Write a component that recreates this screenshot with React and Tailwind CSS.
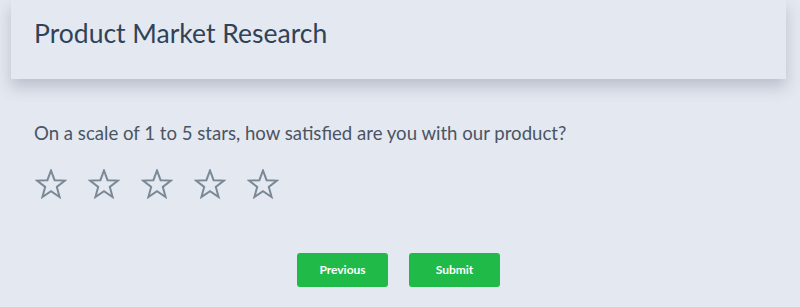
import React, { useState } from 'react';

const Star = ({ filled }) => (
  <svg viewBox="0 0 32 30" className="h-[30px] w-[32px]" fill={filled ? '#7b8896' : 'none'}>
    <polygon
      points="16,1.5 19.6,11.2 30,11.6 21.8,18 24.6,28 16,22.2 7.4,28 10.2,18 2,11.6 12.4,11.2"
      stroke="#7b8896"
      strokeWidth="2"
      strokeLinejoin="miter"
    />
  </svg>
);

export default function App() {
  const [rating, setRating] = useState(0);

  return (
    <div className="min-h-[307px] w-full bg-[#e4e8f0] font-['Lato','Open_Sans',sans-serif]">
      <div className="pl-[11px] pr-[14px] pb-[14px]">
        <div className="h-[79px] bg-[#e4e8f0] px-[23px] pt-[16px] shadow-[0_8px_14px_rgba(90,100,120,0.3)]">
          <h1 className="text-[26.5px] leading-[34px] text-[#2f4358]">Product Market Research</h1>
        </div>
      </div>

      <div className="px-[34px] pt-[27px]">
        <p className="text-[18.6px] leading-[26px] text-[#4a5563]">
          On a scale of 1 to 5 stars, how satisfied are you with our product?
        </p>
        <div className="mt-[23px] flex gap-[21px] pl-[1px]">
          {[1, 2, 3, 4, 5].map((n) => (
            <button key={n} onClick={() => setRating(n)} className="cursor-pointer">
              <Star filled={n <= rating} />
            </button>
          ))}
        </div>
      </div>

      <div className="mt-[54px] flex justify-center gap-[21px] pr-[3px]">
        <button className="h-[34px] w-[91px] rounded-[3px] bg-[#1fba48] text-[12px] font-bold text-white">
          Previous
        </button>
        <button className="h-[34px] w-[91px] rounded-[3px] bg-[#1fba48] text-[12px] font-bold text-white">
          Submit
        </button>
      </div>
    </div>
  );
}
